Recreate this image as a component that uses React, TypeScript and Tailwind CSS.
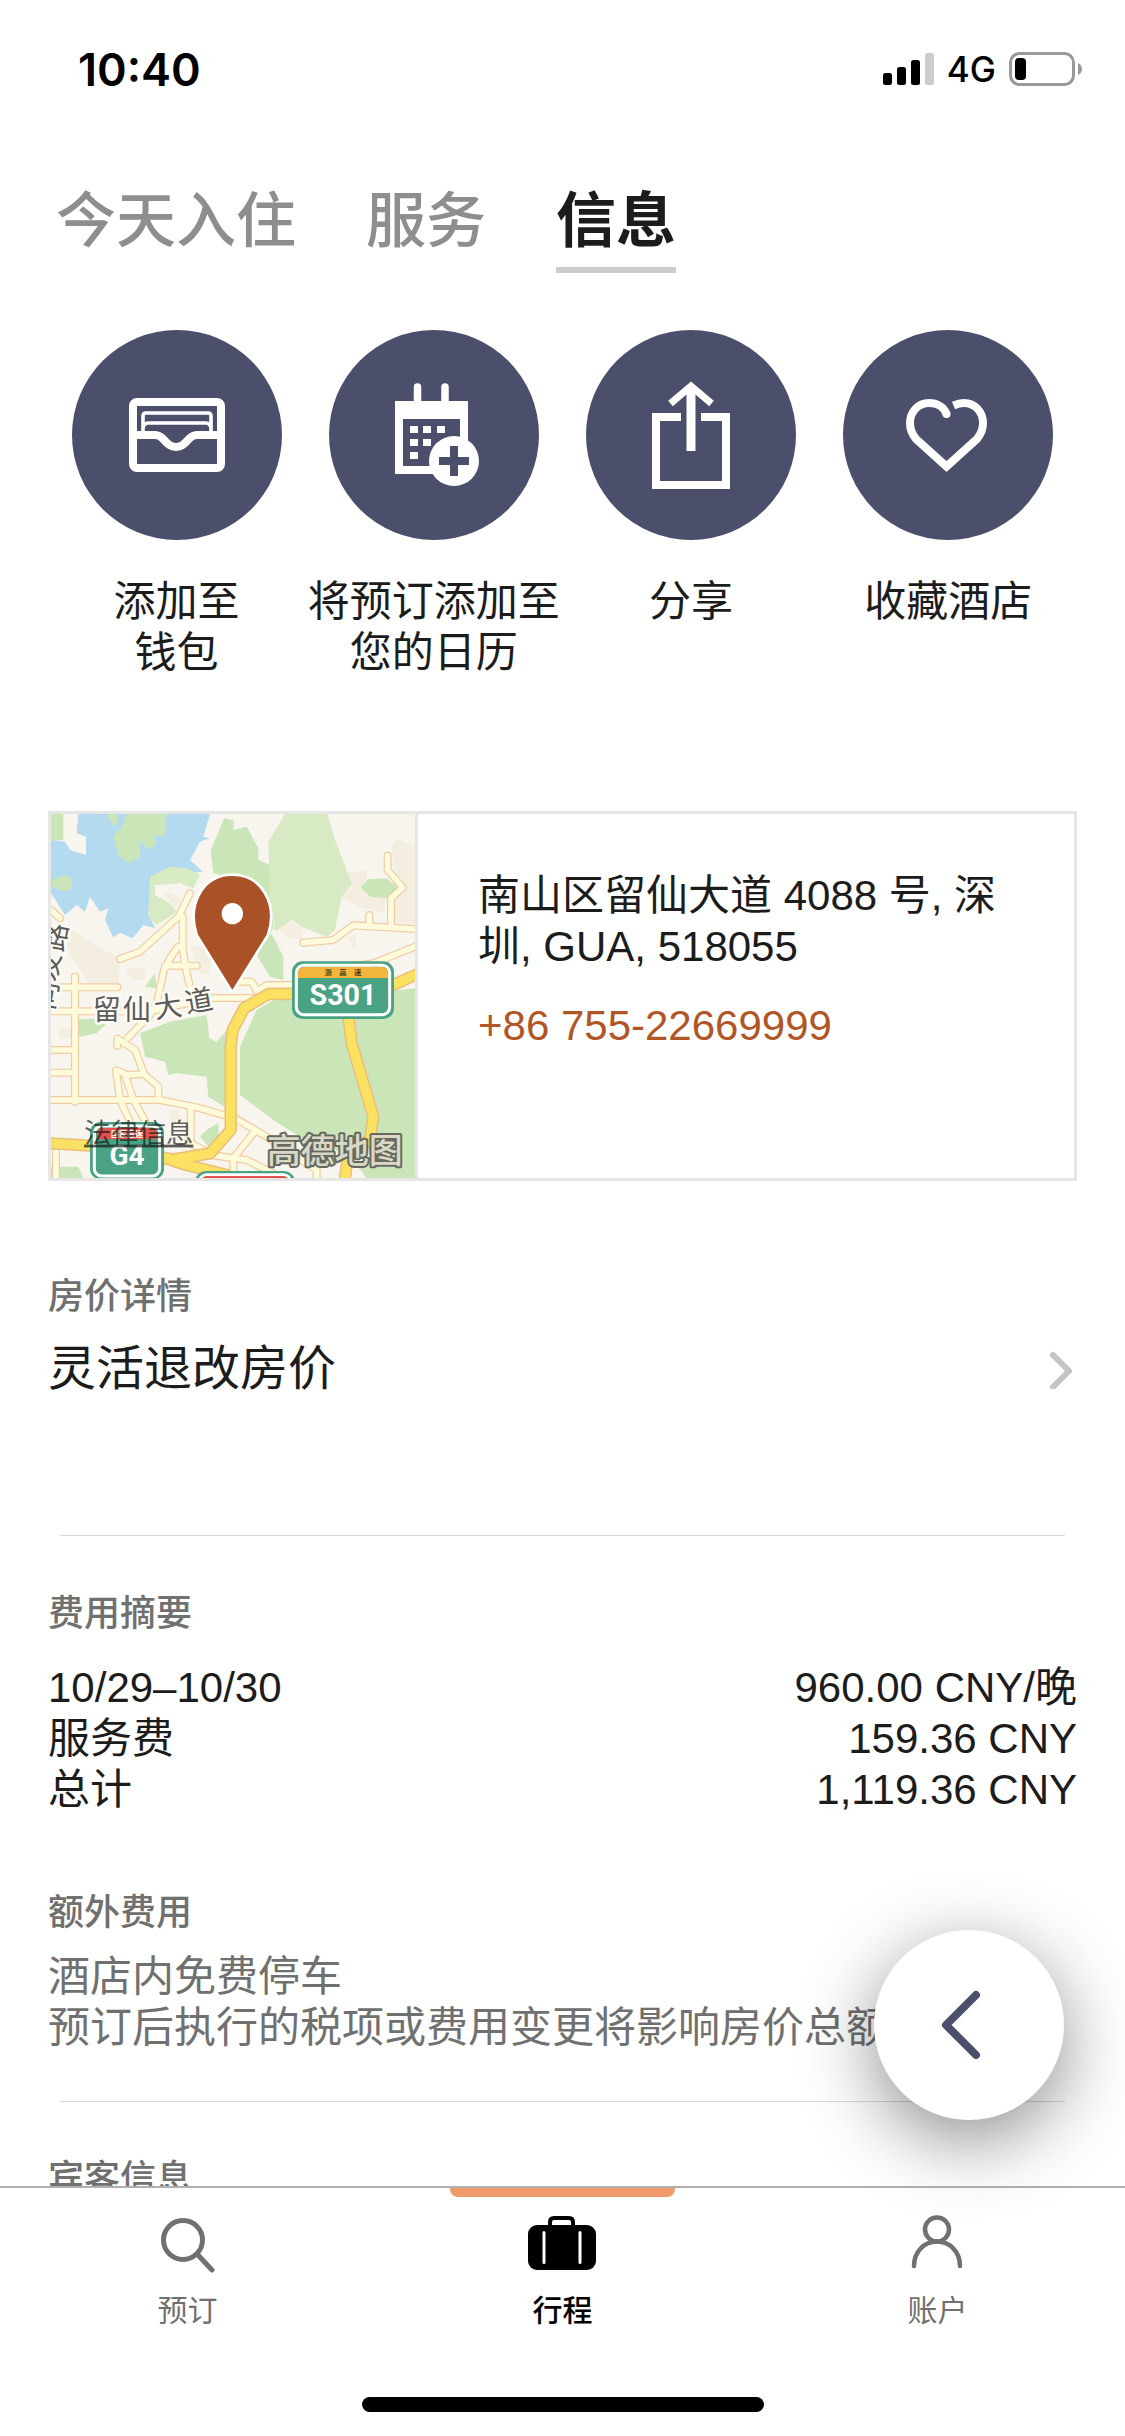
import React from 'react';

const actions = [
  { label: '添加至\n钱包', icon: <WalletIcon /> },
  { label: '将预订添加至\n您的日历', icon: <CalendarIcon /> },
  { label: '分享', icon: <ShareIcon /> },
  { label: '收藏酒店', icon: <HeartIcon /> },
];

const charges = [
  { label: '10/29–10/30', amount: '960.00 CNY/晚' },
  { label: '服务费', amount: '159.36 CNY' },
  { label: '总计', amount: '1,119.36 CNY' },
];

// minor roads, drawn twice: casing first, then the fill
const roads = [
  'M33 562H170L232 562',
  'M33 634H330L515 594H640',
  'M105 530V905',
  'M33 750H105',
  'M33 818H105',
  'M33 900H360L470 922L585 955L680 1010L760 1065L830 1110V1140',
  'M48 1055V1134',
  'M33 330L60 355',
  'M450 280L415 350L300 455L240 477',
  'M428 350V445L438 510L455 580',
  'M415 440Q390 470 372 510L350 610L330 645L262 715',
  'M375 497H470',
  'M232 738V716L285 750L312 822L355 860V895',
  'M228 812L240 900L268 960',
  'M232 812L262 825L312 822',
  'M255 825L280 900L315 962',
  'M452 925V1030L510 1060',
  'M600 545H635L652 575L680 555H770',
  'M580 1075V1110',
  'M510 1065L620 1080L700 1120',
  'M580 1075L640 1000',
  'M790 428L880 420L940 376L1125 387',
  'M988 345V380',
  'M1043 167V210L1088 262L1053 295V380',
  'M940 498L1000 490L1125 440',
];

const majorRoads = [
  'M33 1030L150 1037L260 1060L400 1078L510 1060L572 990V740L578 690L612 625L685 582H790L1000 582L1125 525',
  'M925 650L935 730L1000 950L990 1020L925 1055L915 1134',
  'M360 1070L440 1095L560 1125',
];

function WalletIcon() {
  return (
    <svg viewBox="0 0 210 210" fill="none" stroke="white" aria-hidden="true">
      <rect x="61" y="72" width="88" height="66" rx="4" strokeWidth="8" />
      <path d="M71 103V86q0-3 3-3h62q3 0 3 3v17M71 98q1-5 5-5h58q4 0 5 5" strokeWidth="3.6" />
      <path d="M61 105H83C93 105 93 117 104 117S115 105 125 105H149" strokeWidth="8" />
    </svg>
  );
}

function CalendarIcon() {
  return (
    <svg viewBox="0 0 210 210" fill="white" aria-hidden="true">
      <path fillRule="evenodd" d="M66 71H139V144H66ZM74 89V136H131V89Z" />
      <path d="M88.500 57V75M116 57V75" stroke="white" strokeWidth="7.500" strokeLinecap="round" />
      <path d="M81 96h8v7h-8zM94 96h8v7h-8zM108 96h8v7h-8zM81 109h8v7h-8zM94 109h8v7h-8zM81 122h8v7h-8z" />
      <circle cx="125" cy="131" r="25" />
      <path d="M110 131H140M125 116V146" stroke="#4b4f6c" strokeWidth="8" />
    </svg>
  );
}

function ShareIcon() {
  return (
    <svg viewBox="0 0 210 210" fill="none" stroke="white" strokeWidth="8" aria-hidden="true">
      <path d="M95 87H70V155H140V87H115" />
      <path d="M105 58V121" strokeWidth="9" />
      <path d="M84.500 73.500L105 56L125.500 73.500" strokeWidth="7" />
    </svg>
  );
}

function HeartIcon() {
  return (
    <svg viewBox="0 0 210 210" fill="none" stroke="white" strokeWidth="8" aria-hidden="true">
      <path d="M103.500 84C101 77 94 73 86 73C75 73 67 82 67 93C67 99 69 104 73 109L103.500 136.500L134 109C138 104 140 99 140 93C140 82 132 73 121 73C117 73 114 74 110.500 75.500" />
      <circle cx="103.500" cy="84" r="4" fill="white" stroke="none" />
    </svg>
  );
}

function HotelMap() {
  return (
    <svg
      viewBox="33 42 1092 1092"
      className="block size-[364px]"
      role="img"
      aria-label="酒店地图"
      fontFamily="'Noto Sans CJK SC', sans-serif"
    >
      <rect x="33" y="42" width="1092" height="1092" fill="#f8f5ee" />

      <g fill="#f4eee0">
        <path d="M85 380L110 400L238 475V555H150L80 450Z" />
        <path d="M930 215L980 212V290L1040 295L1030 340L960 320L900 290L915 235Z" />
        <path d="M1055 140L1070 115L1125 140V370H1060V300L1100 260L1060 200Z" />
        <path d="M710 385L740 360L785 380L790 420L740 410ZM255 505H315V540H275ZM370 275L420 290V315L400 320ZM58 682H95V715H58ZM385 940L412 925L420 980L395 970ZM450 440H510V520H480ZM920 405L950 410L945 455Z" />
      </g>

      <path d="M115 42H510L490 110L508 115L480 125L450 180L488 215L440 220L395 200L335 230L325 340L345 385L310 375L278 415L240 398L220 412L195 360L205 325L180 335L150 290L135 335L110 315L75 345L33 280V120L75 125L90 150L138 165V110L110 100Z" fill="#b3daee" />

      <g fill="#cae5b8">
        <path d="M33 42H70V120L33 122ZM200 42H232V65L220 80ZM262 42H378V105L340 110L350 130L330 150L300 125V170L265 190L235 165L220 110L245 80Z" />
        <path d="M35 240L75 225L95 235V265L72 275L35 258Z" />
        <path d="M553 55L582 62L580 90L620 80L655 145V180L690 195L700 385L650 465L690 530L730 540V470L705 420L680 380L590 240L520 220L512 150Z" />
        <path d="M962 262L985 238L1040 235L1070 260V288L1040 295L990 290Z" />
        <path d="M300 700L390 665L500 645L508 715L530 725L570 680V930L505 890L500 830L410 820L385 825L375 785L315 770Z" />
        <path d="M650 630L700 600L900 590L1125 565V1100L980 1060L880 1050L780 1010L700 960L600 885V740Z" />
        <path d="M115 658L215 655L170 700L118 710ZM33 1100H115L130 1134H33ZM950 1095L1125 1090V1134H980ZM345 520L350 565L315 560Z" />
        <path d="M500 990L535 968V1010L505 1040L480 1010Z" />
      </g>

      <g fill="#d7eac4">
        <path d="M325 350L330 230L390 200L440 205L480 225L460 265L420 250L345 255V285L390 310L410 335L350 375Z" />
        <path d="M685 125L735 42H862L885 120L935 250L905 290L885 390L860 410L795 385L755 360L705 395L690 300Z" />
      </g>

      <g fill="none" strokeLinecap="round" strokeLinejoin="round">
        {roads.map((d) => <path key={d} d={d} stroke="#f0cba2" strokeWidth="24" />)}
        {roads.map((d) => <path key={d} d={d} stroke="#fdfbdc" strokeWidth="17" />)}
        {majorRoads.map((d) => <path key={d} d={d} stroke="#ebbd7a" strokeWidth="37" />)}
        {majorRoads.map((d) => <path key={d} d={d} stroke="#fae161" strokeWidth="28" />)}
      </g>

      <g fill="#5a5a5a" fontSize="84" stroke="#fbfaf4" strokeWidth="16" strokeLinejoin="round" paintOrder="stroke">
        <text x="158" y="660">留</text>
        <text x="248" y="660">仙</text>
        <text x="342" y="650" transform="rotate(-8 384 618)">大</text>
        <text x="434" y="632" transform="rotate(-10 476 600)">道</text>
        <text x="5" y="442" transform="rotate(-80 47 412)">路</text>
        <text x="-17" y="530" transform="rotate(-80 25 500)">发</text>
        <text x="-24" y="616" transform="rotate(-80 18 586)">同</text>
      </g>

      <g>
        <rect x="756" y="484" width="306" height="173" rx="32" fill="#4aa284" />
        <rect x="769" y="496" width="280" height="148" rx="22" fill="#4aa284" stroke="white" strokeWidth="9" />
        <path d="M774 534V520Q774 501 793 501H1025Q1044 501 1044 520V534Z" fill="#f3b53c" />
        <text x="909" y="526" fontSize="22" fontWeight="700" fill="#4a3b16" textAnchor="middle">浙　高　速</text>
        <text x="909" y="614" fontSize="86" fontWeight="700" fill="white" textAnchor="middle" fontFamily="Roboto, sans-serif">S301</text>
      </g>

      <g>
        <rect x="150" y="966" width="222" height="172" rx="32" fill="#4aa284" />
        <rect x="163" y="978" width="196" height="150" rx="22" fill="#4aa284" stroke="white" strokeWidth="9" />
        <path d="M172 1018V1002Q172 984 190 984H332Q350 984 350 1002V1018Z" fill="#e0534c" />
        <text x="261" y="1010" fontSize="24" fontWeight="700" fill="white" textAnchor="middle">国家高速</text>
        <text x="261" y="1096" fontSize="84" fontWeight="700" fill="white" textAnchor="middle" fontFamily="Roboto, sans-serif">G4</text>
        <rect x="466" y="1113" width="298" height="60" rx="32" fill="#4aa284" />
        <rect x="478" y="1124" width="274" height="60" rx="22" fill="#e0534c" stroke="white" strokeWidth="8" />
      </g>

      <text x="132" y="1028" fontSize="82" fill="#111" fillOpacity="0.68" textDecoration="underline">法律信息</text>
      <text x="680" y="1088" fontSize="102" fontWeight="500" fill="#d9d8c6" stroke="#67695f" strokeWidth="12" strokeLinejoin="round" paintOrder="stroke">高德地图</text>

      <path
        d="M577 577L470 405C440 310 490 224 577 224S715 310 684 405Z"
        fill="#a95127"
        stroke="white"
        strokeWidth="8"
      />
      <circle cx="577" cy="341" r="32" fill="white" />
    </svg>
  );
}

function StatusBar() {
  return (
    <div className="flex h-[138px] shrink-0 items-center justify-between pr-[43px] pl-[78px] font-[Inter,sans-serif] text-black">
      <span className="text-[45px] font-semibold">10:40</span>
      <div className="flex items-center gap-3">
        <svg viewBox="0 0 52 34" className="h-[34px] w-[52px]" aria-hidden="true">
          <rect x="0" y="21" width="9" height="12" rx="2.500" />
          <rect x="14" y="15" width="9" height="18" rx="2.500" />
          <rect x="28" y="8" width="9" height="25" rx="2.500" />
          <rect x="42" y="1" width="9" height="32" rx="2.500" fill="#ccc" />
        </svg>
        <span className="text-[35px] font-medium">4G</span>
        <svg viewBox="0 0 74 34" className="h-[34px] w-[74px]" aria-hidden="true">
          <rect x="2.500" y="1.500" width="63" height="31" rx="9" fill="none" stroke="#999" strokeWidth="3" />
          <rect x="7" y="6" width="11" height="22" rx="4" />
          <path d="M70 11q4 2 4 6t-4 6z" fill="#999" />
        </svg>
      </div>
    </div>
  );
}

const sectionTitle = 'text-[36px] leading-[48px] font-medium text-[#707070]';

const App = () => {
  return (
    <div className="relative flex h-screen flex-col overflow-hidden bg-white font-['Liberation_Sans','Noto_Sans_CJK_SC',sans-serif] text-[42px] leading-[51px] text-[#1c1c1c]">
      <StatusBar />

      <main className="min-h-0 flex-1 overflow-hidden">
        <nav className="flex gap-[70px] px-14 pt-[39px] text-[60px] leading-[90px] font-medium">
          <button className="border-b-[6px] border-transparent text-[#8e8e8e]">今天入住</button>
          <button className="border-b-[6px] border-transparent text-[#8e8e8e]">服务</button>
          <button className="border-b-[6px] border-[#ccc] font-bold">信息</button>
        </nav>

        <div className="mt-[57px] grid grid-cols-4 px-12">
          {actions.map((action) => (
            <button key={action.label} className="flex flex-col items-center">
              <span className="size-[210px] rounded-full bg-[#4b4f6c]">{action.icon}</span>
              <span className="mt-9 whitespace-pre-line">{action.label}</span>
            </button>
          ))}
        </div>

        <div className="px-12">
          <section className="mt-[133px] flex border-[3px] border-[#e6e6e6]">
            <a href="#map" className="shrink-0 border-r-[3px] border-[#e6e6e6]">
              <HotelMap />
            </a>
            <div className="px-15 pt-14">
              <p>南山区留仙大道 4088 号, 深圳, GUA, 518055</p>
              <a href="tel:+8675522669999" className="mt-7 block text-[#b05627]">+86 755-22669999</a>
            </div>
          </section>

          <section className="mt-[92px]">
            <h2 className={sectionTitle}>房价详情</h2>
            <button className="mt-4 flex w-full items-center justify-between text-left text-[48px] leading-[64px]">
              灵活退改房价
              <svg viewBox="0 0 28 40" className="mr-0.5 h-10 w-7" fill="none" stroke="#c4c4c6" strokeWidth="6" strokeLinecap="round" aria-hidden="true">
                <path d="M6 6L22 22L6 38" strokeLinejoin="round" />
              </svg>
            </button>
          </section>

          <hr className="mx-3 mt-[134px] border-t border-[#d9d9d9]" />

          <section className="mt-[54px]">
            <h2 className={sectionTitle}>费用摘要</h2>
            <table className="mt-6 w-full">
              <tbody>
                {charges.map((charge) => (
                  <tr key={charge.label}>
                    <th className="p-0 text-left font-normal">{charge.label}</th>
                    <td className="p-0 text-right">{charge.amount}</td>
                  </tr>
                ))}
              </tbody>
            </table>
          </section>

          <section className="mt-[74px]">
            <h2 className={sectionTitle}>额外费用</h2>
            <p className="mt-[14px] whitespace-nowrap text-[#707070]">
              酒店内免费停车<br />
              预订后执行的税项或费用变更将影响房价总额
            </p>
          </section>

          <hr className="mx-3 mt-12 border-t border-[#d9d9d9]" />

          <section className="mt-[53px]">
            <h2 className={sectionTitle}>宾客信息</h2>
          </section>
        </div>
      </main>

      <footer className="shrink-0 border-t-2 border-[#b0b0b0] bg-white">
        <nav className="grid grid-cols-3 text-[30px] leading-[40px] text-[#707070]">
          <a href="#book" className="flex flex-col items-center pt-[27px]">
            <svg viewBox="0 0 70 58" className="h-[58px] w-[70px]" fill="none" stroke="#707070" strokeWidth="5" strokeLinecap="round" aria-hidden="true">
              <circle cx="30" cy="25" r="19.500" />
              <path d="M45 40L59 55" />
            </svg>
            <span className="mt-[18px]">预订</span>
          </a>
          <a href="#trips" className="flex flex-col items-center font-medium text-black">
            <span className="h-[9px] w-3/5 rounded-b-lg bg-[#ef9a6b]" />
            <svg viewBox="0 0 70 58" className="mt-[18px] h-[58px] w-[70px]" aria-hidden="true">
              <path d="M22 12V7Q22 3 26 3H41Q45 3 45 7V12" fill="none" stroke="black" strokeWidth="4" />
              <rect x="0" y="10" width="68" height="45" rx="9" />
              <path d="M16 17.500V47.500M52 17.500V47.500" stroke="white" strokeWidth="3" strokeLinecap="round" />
            </svg>
            <span className="mt-[18px]">行程</span>
          </a>
          <a href="#account" className="flex flex-col items-center pt-[27px]">
            <svg viewBox="0 0 70 58" className="h-[58px] w-[70px]" fill="none" stroke="#707070" strokeWidth="4.500" strokeLinecap="round" aria-hidden="true">
              <circle cx="34" cy="14.500" r="12" />
              <path d="M11 51C11 37 21 26.500 34 26.500S57 37 57 51" />
            </svg>
            <span className="mt-[18px]">账户</span>
          </a>
        </nav>
        <div className="mx-auto mt-[66px] mb-6 h-[15px] w-[402px] rounded-full bg-black" />
      </footer>

      <button
        aria-label="返回"
        className="absolute right-[61px] bottom-[316px] flex size-[190px] items-center justify-center rounded-full bg-white shadow-[0_20px_75px_rgba(0,0,0,0.45)]"
      >
        <svg viewBox="0 0 80 80" className="size-20" fill="none" stroke="#4b4f6c" strokeWidth="8" strokeLinecap="round" strokeLinejoin="round" aria-hidden="true">
          <path d="M47 10L17 40L47 70" />
        </svg>
      </button>
    </div>
  );
};

export default App;
